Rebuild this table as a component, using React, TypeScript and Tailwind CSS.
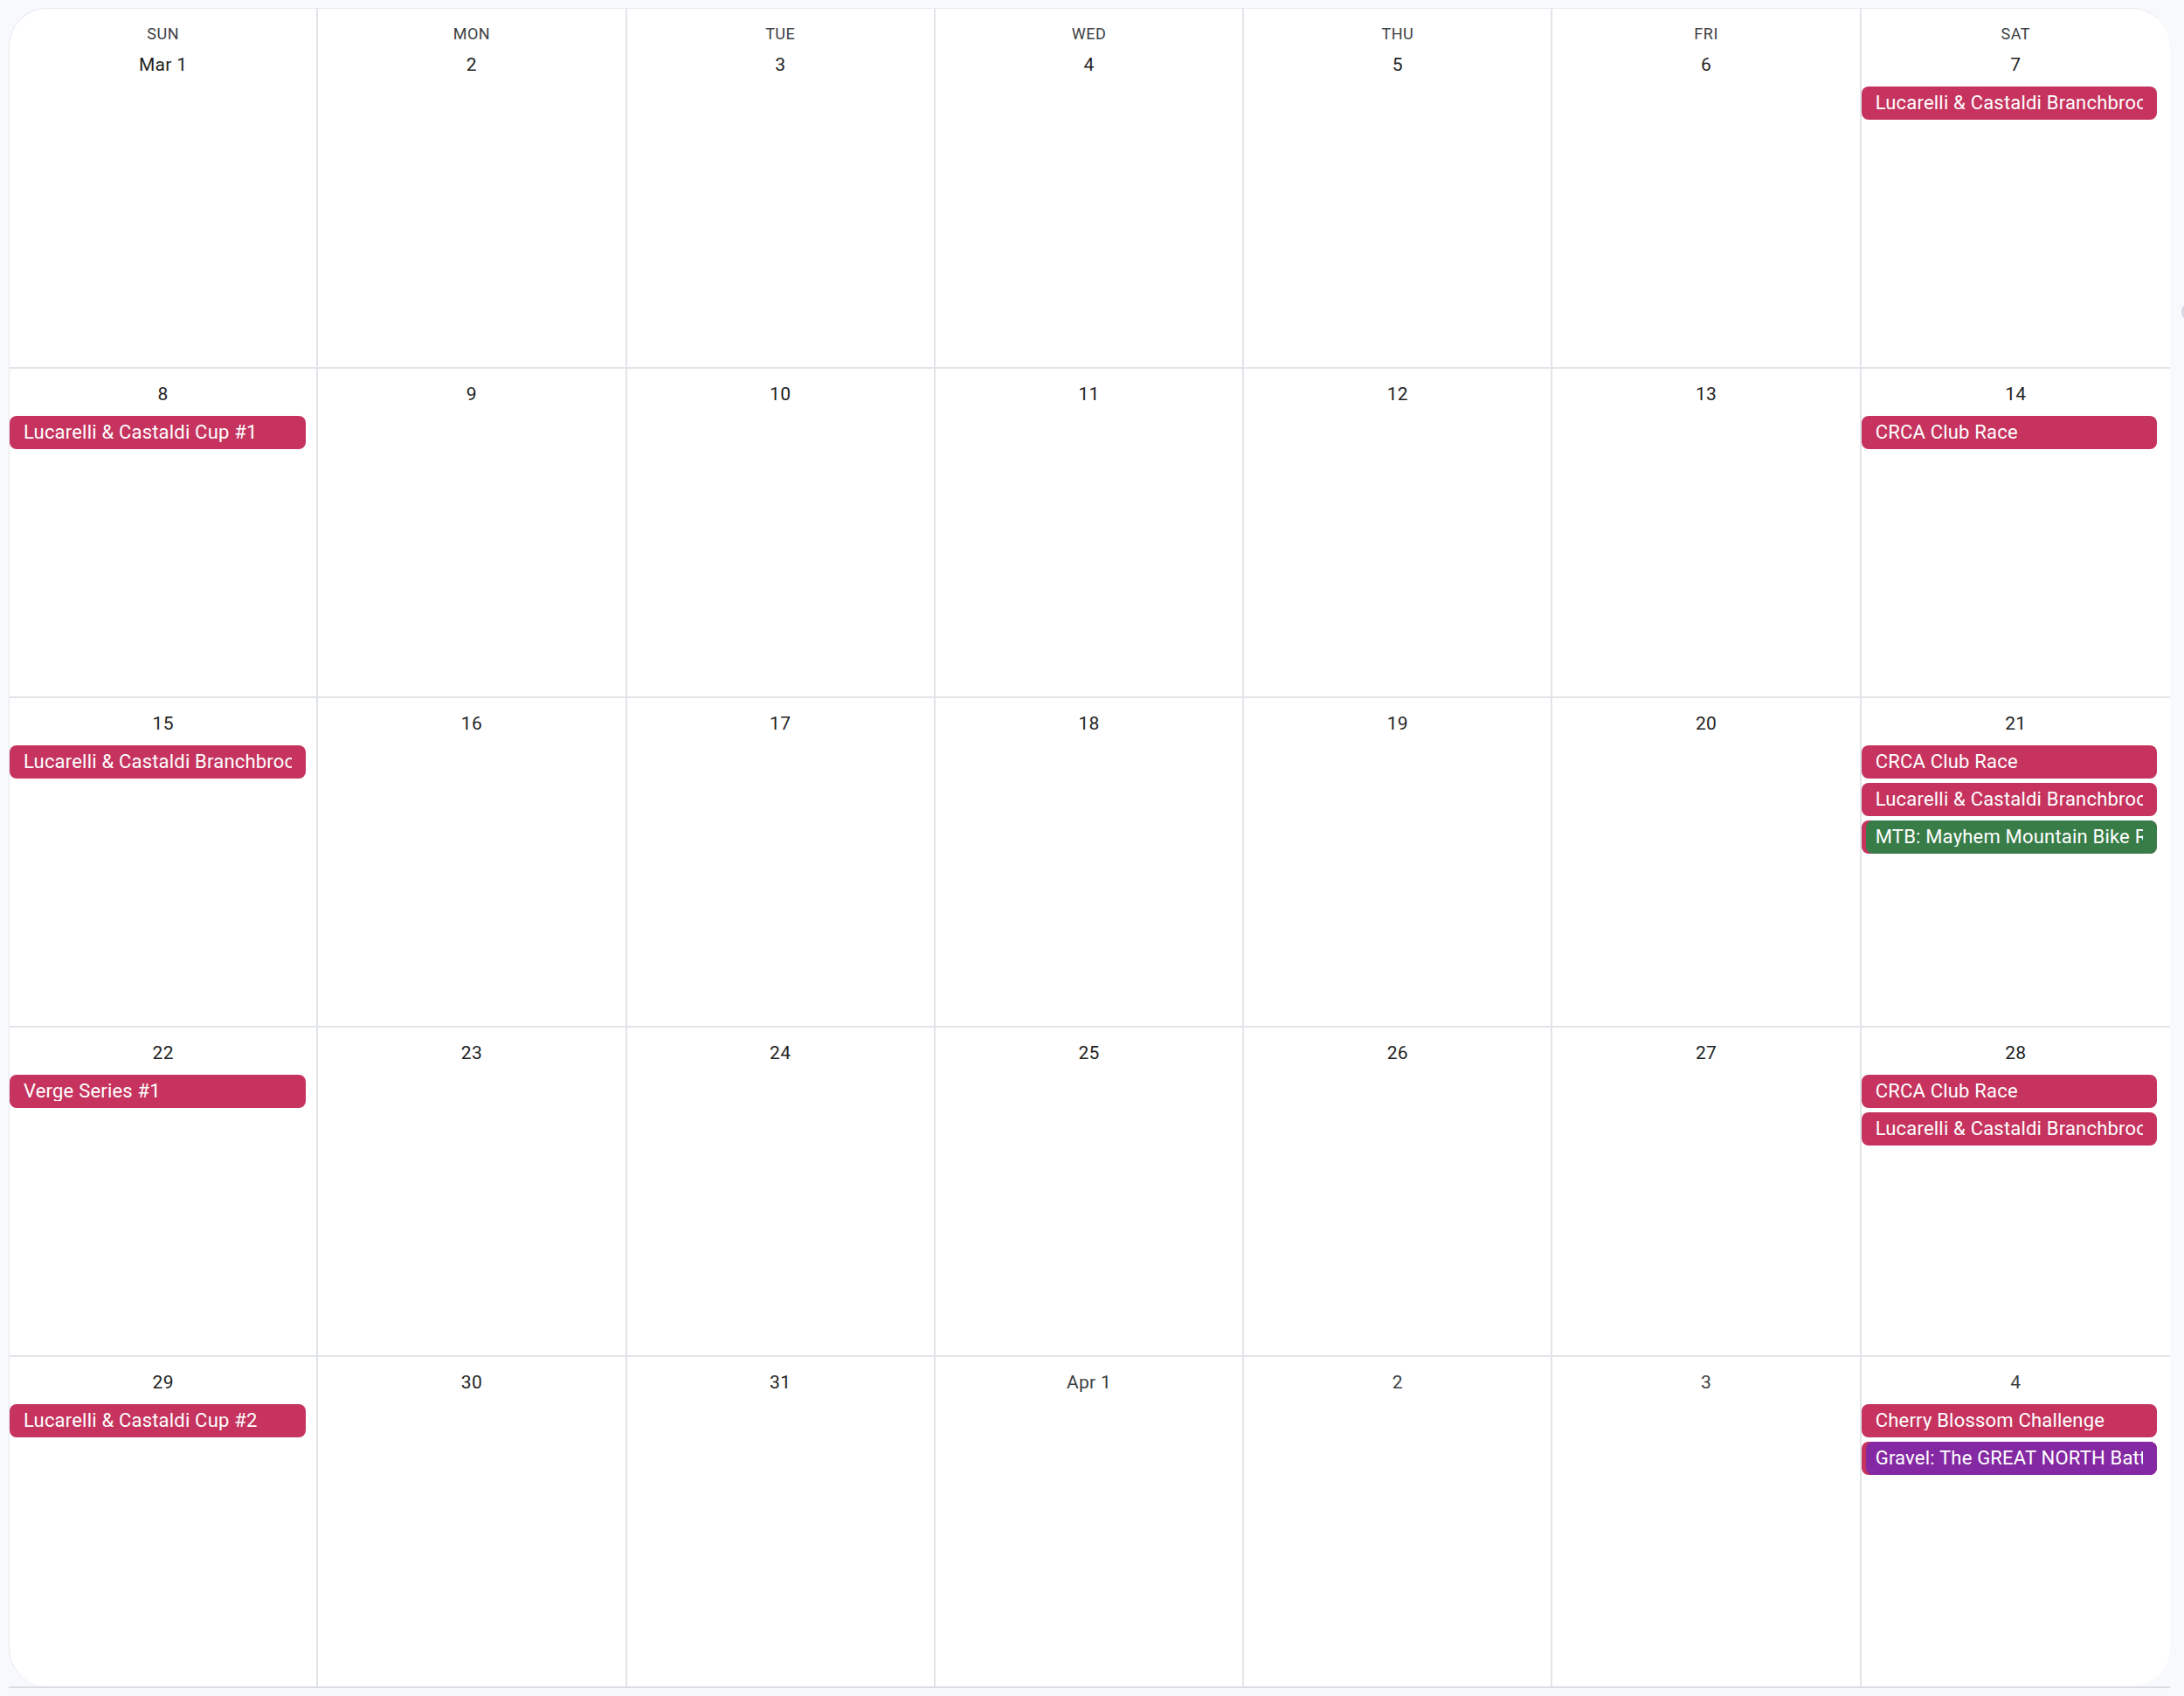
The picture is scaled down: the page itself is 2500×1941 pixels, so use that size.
type Chip = { title: string; color: string; accent?: string };
type Day = { label: string; muted?: boolean; events?: Chip[] };

const PINK = 'pink';
const GREEN = 'green';
const PURPLE = 'purple';

const chipBg: Record<string, string> = {
  [PINK]: 'bg-[#c5335e]',
  [GREEN]: 'bg-[#387d48]',
  [PURPLE]: 'bg-[#8429a3]',
};

const WEEKDAYS = ['SUN', 'MON', 'TUE', 'WED', 'THU', 'FRI', 'SAT'];

const branchbrook = 'Lucarelli & Castaldi Branchbrook Park Race';

const weeks: Day[][] = [
  [
    { label: 'Mar 1' },
    { label: '2' },
    { label: '3' },
    { label: '4' },
    { label: '5' },
    { label: '6' },
    { label: '7', events: [{ title: branchbrook, color: PINK }] },
  ],
  [
    { label: '8', events: [{ title: 'Lucarelli & Castaldi Cup #1', color: PINK }] },
    { label: '9' },
    { label: '10' },
    { label: '11' },
    { label: '12' },
    { label: '13' },
    { label: '14', events: [{ title: 'CRCA Club Race', color: PINK }] },
  ],
  [
    { label: '15', events: [{ title: branchbrook, color: PINK }] },
    { label: '16' },
    { label: '17' },
    { label: '18' },
    { label: '19' },
    { label: '20' },
    {
      label: '21',
      events: [
        { title: 'CRCA Club Race', color: PINK },
        { title: branchbrook, color: PINK },
        { title: 'MTB: Mayhem Mountain Bike Race', color: GREEN, accent: PINK },
      ],
    },
  ],
  [
    { label: '22', events: [{ title: 'Verge Series #1', color: PINK }] },
    { label: '23' },
    { label: '24' },
    { label: '25' },
    { label: '26' },
    { label: '27' },
    {
      label: '28',
      events: [
        { title: 'CRCA Club Race', color: PINK },
        { title: branchbrook, color: PINK },
      ],
    },
  ],
  [
    { label: '29', events: [{ title: 'Lucarelli & Castaldi Cup #2', color: PINK }] },
    { label: '30' },
    { label: '31' },
    { label: 'Apr 1', muted: true },
    { label: '2', muted: true },
    { label: '3', muted: true },
    {
      label: '4',
      muted: true,
      events: [
        { title: 'Cherry Blossom Challenge', color: PINK },
        { title: 'Gravel: The GREAT NORTH Battle of the Bikes', color: PURPLE, accent: PINK },
      ],
    },
  ],
];

function EventChip({ chip }: { chip: Chip }) {
  // overlapping events show the earlier calendar's colour as a sliver on the left
  if (chip.accent) {
    return (
      <div className={`h-[38px] w-full rounded-lg ${chipBg[chip.accent]}`}>
        <div className={`ml-[5px] flex h-full items-center rounded-lg pl-[11px] pr-4 ${chipBg[chip.color]}`}>
          <span className="overflow-hidden whitespace-nowrap text-[22px] leading-none tracking-[0.2px] text-white">
            {chip.title}
          </span>
        </div>
      </div>
    );
  }
  return (
    <div className={`flex h-[38px] w-full items-center rounded-lg px-4 ${chipBg[chip.color]}`}>
      <span className="overflow-hidden whitespace-nowrap text-[22px] leading-none tracking-[0.2px] text-white">
        {chip.title}
      </span>
    </div>
  );
}

function DayCell({ day, weekday, last }: { day: Day; weekday?: string; last: boolean }) {
  return (
    <div className={`flex min-w-0 flex-col pt-[17px] ${last ? '' : 'border-r-2 border-[#e1e4e8]'}`}>
      {weekday && (
        <div className="h-[35px] text-center text-[18px] leading-6 tracking-[0.5px] text-[#3c4043]">
          {weekday}
        </div>
      )}
      <div
        className={`text-center text-[21px] leading-6 tracking-[0.3px] ${
          day.muted ? 'text-[#3c4043]' : 'text-[#1f1f1f]'
        }`}
      >
        {day.label}
      </div>
      {day.events && (
        <div className={`mt-[13px] flex flex-col gap-[5px] ${last ? 'pr-[15px]' : 'pr-[12px]'}`}>
          {day.events.map((e, i) => (
            <EventChip key={i} chip={e} />
          ))}
        </div>
      )}
    </div>
  );
}

export default function App() {
  return (
    <main
      className="relative h-[1941px] w-[2500px] overflow-hidden bg-[#f8f9fc] pl-[10px] pt-[9px]"
      style={{ fontFamily: 'Roboto, "Noto Sans", "Liberation Sans", sans-serif' }}
    >
      <div className="w-[2474px] border-b-2 border-[#dadde3]">
        <div className="overflow-hidden rounded-[44px] border-l border-t border-[#e6e9ef] bg-white">
          {weeks.map((week, wi) => (
            <div
              key={wi}
              className={`grid grid-cols-7 ${wi === 0 ? 'h-[412px]' : 'h-[377px]'} ${
                wi < weeks.length - 1 ? 'border-b-2 border-[#e1e4e8]' : ''
              }`}
            >
              {week.map((day, di) => (
                <DayCell
                  key={di}
                  day={day}
                  weekday={wi === 0 ? WEEKDAYS[di] : undefined}
                  last={di === 6}
                />
              ))}
            </div>
          ))}
        </div>
      </div>

      {/* edge of a control that sits just past the right side of the viewport */}
      <div className="absolute left-[2497px] top-[345px] h-6 w-6 rounded-full bg-[#d3d9e8]" />
    </main>
  );
}
